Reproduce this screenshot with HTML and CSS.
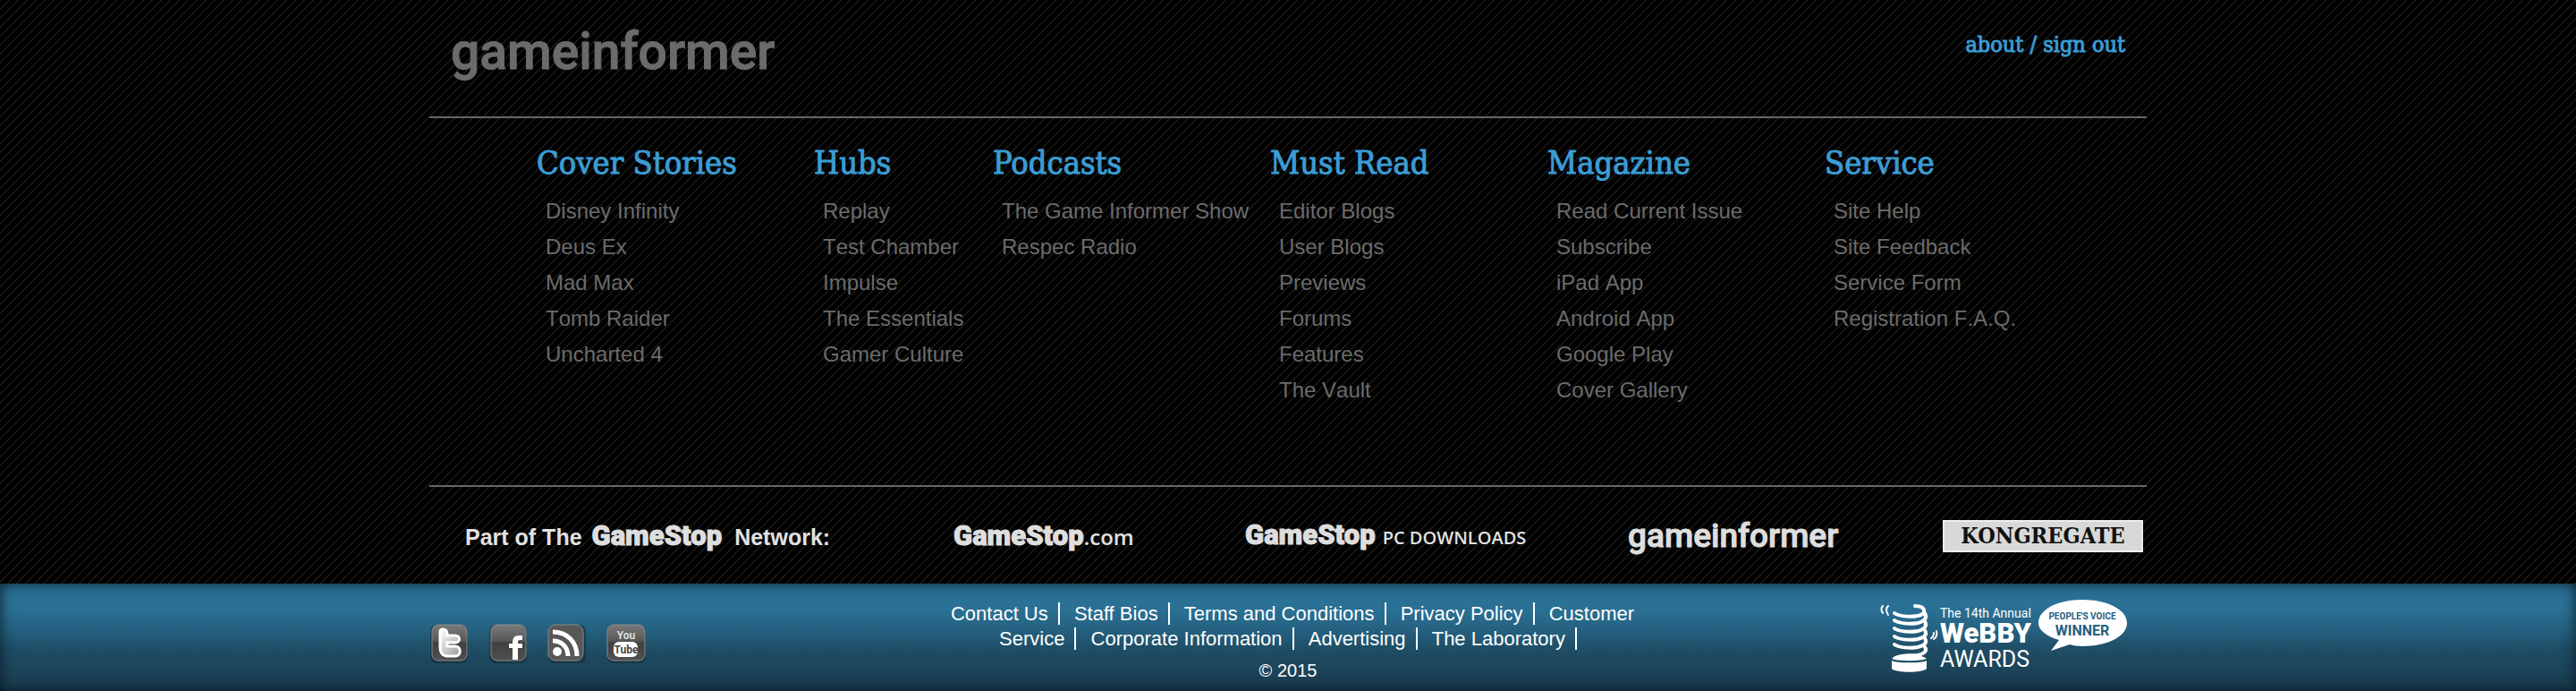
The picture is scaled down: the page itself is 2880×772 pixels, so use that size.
FILE: index.html
```html
<!DOCTYPE html>
<html lang="en">
<head>
<meta charset="utf-8">
<title>Game Informer</title>
<link rel="stylesheet" href="styles.css">
</head>
<body>
<footer class="footer">
  <div class="wrap">
    <div class="top">
      <a class="wordmark" href="#">gameinformer</a>
      <p class="account"><a href="#">about</a> / <a href="#">sign out</a></p>
    </div>
    <nav class="columns" aria-label="Site">
      <section class="column">
        <h2>Cover Stories</h2>
        <ul>
          <li><a href="#">Disney Infinity</a></li>
          <li><a href="#">Deus Ex</a></li>
          <li><a href="#">Mad Max</a></li>
          <li><a href="#">Tomb Raider</a></li>
          <li><a href="#">Uncharted 4</a></li>
        </ul>
      </section>
      <section class="column column-slim">
        <h2>Hubs</h2>
        <ul>
          <li><a href="#">Replay</a></li>
          <li><a href="#">Test Chamber</a></li>
          <li><a href="#">Impulse</a></li>
          <li><a href="#">The Essentials</a></li>
          <li><a href="#">Gamer Culture</a></li>
        </ul>
      </section>
      <section class="column">
        <h2>Podcasts</h2>
        <ul>
          <li><a href="#">The Game Informer Show</a></li>
          <li><a href="#">Respec Radio</a></li>
        </ul>
      </section>
      <section class="column">
        <h2>Must Read</h2>
        <ul>
          <li><a href="#">Editor Blogs</a></li>
          <li><a href="#">User Blogs</a></li>
          <li><a href="#">Previews</a></li>
          <li><a href="#">Forums</a></li>
          <li><a href="#">Features</a></li>
          <li><a href="#">The Vault</a></li>
        </ul>
      </section>
      <section class="column">
        <h2>Magazine</h2>
        <ul>
          <li><a href="#">Read Current Issue</a></li>
          <li><a href="#">Subscribe</a></li>
          <li><a href="#">iPad App</a></li>
          <li><a href="#">Android App</a></li>
          <li><a href="#">Google Play</a></li>
          <li><a href="#">Cover Gallery</a></li>
        </ul>
      </section>
      <section class="column">
        <h2>Service</h2>
        <ul>
          <li><a href="#">Site Help</a></li>
          <li><a href="#">Site Feedback</a></li>
          <li><a href="#">Service Form</a></li>
          <li><a href="#">Registration F.A.Q.</a></li>
        </ul>
      </section>
    </nav>
    <div class="network">
      <p class="network-label">Part of The <span class="gamestop">GameStop</span> Network:</p>
      <a href="#"><span class="gamestop">GameStop</span><span class="dotcom">.com</span></a>
      <a href="#"><span class="gamestop">GameStop</span><span class="pc">PC DOWNLOADS</span></a>
      <a class="wordmark wordmark-small" href="#">gameinformer</a>
      <a class="kongregate" href="#">KONGREGATE</a>
    </div>
  </div>
  <div class="bar">
    <div class="wrap bar-inner">
      <div class="social">
        <a href="#" aria-label="Twitter">
          <svg viewBox="0 0 44 44">
            <defs>
              <linearGradient id="tile" x1="0" y1="0" x2="0" y2="1">
                <stop offset="0" stop-color="#7a7a7a"/><stop offset=".45" stop-color="#585858"/><stop offset=".5" stop-color="#404040"/><stop offset="1" stop-color="#505050"/>
              </linearGradient>
              <linearGradient id="bird" x1="0" y1="0" x2="1" y2="1">
                <stop offset="0" stop-color="#fff"/><stop offset=".6" stop-color="#c4c4c4"/><stop offset="1" stop-color="#999"/>
              </linearGradient>
            </defs>
            <rect class="tile-shadow" x="1" y="1" width="42" height="43" rx="7"/>
            <rect class="tile" x="3" y="1" width="39" height="40" rx="7" fill="url(#tile)"/>
            <path class="halo" fill="url(#bird)" d="M15 6c3 0 5 2 5 5v2h9c6 0 6 8 0 8h-9v4h9c7 0 7 11 0 11H20c-5 0-8-4-8-9V9c0-2 1-3 3-3z"/>
          </svg>
        </a>
        <a href="#" aria-label="Facebook">
          <svg viewBox="0 0 44 44">
            <rect class="tile-shadow" x="1" y="1" width="42" height="43" rx="7"/>
            <rect class="tile" x="3" y="1" width="39" height="40" rx="7" fill="url(#tile)"/>
            <path fill="#fff" d="M38 13v5h-3c-2 0-2 1-2 4h5v5h-5v13h-6V27h-4v-5h4c0-6 2-9 7-9z"/>
          </svg>
        </a>
        <a href="#" aria-label="RSS">
          <svg viewBox="0 0 44 44">
            <rect class="tile-shadow" x="1" y="1" width="42" height="43" rx="7"/>
            <rect class="tile" x="1" y="1" width="39" height="40" rx="8" fill="#585858"/>
            <circle cx="11" cy="31" r="5" fill="#fff"/>
            <path class="wave" d="M6 19c10 0 17 7 17 17M6 9c16 0 27 11 27 27"/>
          </svg>
        </a>
        <a href="#" aria-label="YouTube">
          <svg viewBox="0 0 44 44">
            <rect class="tile-shadow" x="1" y="1" width="43" height="43" rx="7"/>
            <rect class="tile" x="1" y="1" width="42" height="40" rx="7" fill="url(#tile)"/>
            <rect x="8" y="20" width="27" height="17" rx="6" fill="#fff"/>
            <text class="yt" x="22" y="17" fill="#ddd">You</text>
            <text class="yt" x="22" y="33" fill="#444">Tube</text>
          </svg>
        </a>
      </div>
      <div class="legal">
        <p class="legal-links"><a href="#">Contact Us</a> <a href="#">Staff Bios</a> <a href="#">Terms and Conditions</a> <a href="#">Privacy Policy</a> <a href="#">Customer Service</a> <a href="#">Corporate Information</a> <a href="#">Advertising</a> <a href="#">The Laboratory</a></p>
        <p class="copyright">© 2015</p>
      </div>
      <a class="webby" href="#">
        <svg viewBox="0 0 280 84" role="img" aria-label="The 14th Annual Webby Awards, People's Voice Winner">
          <path class="shake" d="M5 7c-2 2-2 5 0 8M11 7c-3 3-2 7 0 10M59 43c2-1 3-3 3-6M62 44c3-2 4-5 3-9"/>
          <path class="coil" d="M41 7c12 0 14 9 3 11-10 2-22 0-26-3M52 15c3 5 0 9-8 11-10 2-22 0-26-3M52 24c3 5 0 9-8 11-10 2-22 0-26-3M52 34c3 5 0 8-8 10-10 2-22 0-26-3M52 43c3 5 0 8-8 10-10 2-22 0-26-3M52 53c3 4 0 7-8 9-14 0-24 1-26 4"/>
          <path fill="#fff" d="M15 66c5-6 33-6 39 0v11c-5 5-34 5-39 0z"/>
          <path class="rim" d="M15 67c6 3 33 3 39 0"/>
          <g class="webby-text">
            <text x="69" y="20" font-size="14">The 14th Annual</text>
            <text class="heavy" x="69" y="48" font-size="31">WeBBY</text>
            <text x="69" y="75" font-size="25">AWARDS</text>
          </g>
          <path fill="#fff" d="M228 0c28 0 50 11 50 26s-22 26-50 26c-5 0-10-1-14-2l-21 7 9-12c-14-4-23-11-23-19 0-15 21-26 49-26z"/>
          <g class="bubble-text">
            <text x="228" y="22" font-size="10">PEOPLE'S VOICE</text>
            <text x="228" y="40" font-size="16">WINNER</text>
          </g>
        </svg>
      </a>
    </div>
  </div>
</footer>
</body>
</html>
```
FILE: styles.css
```css
* { box-sizing: border-box; }

body {
  margin: 0;
  background: #000;
  font-family: "Liberation Sans", Arial, sans-serif;
}

a { color: inherit; text-decoration: none; }
p, h2, ul { margin: 0; padding: 0; }
ul { list-style: none; }

.footer {
  background-image: linear-gradient(135deg, #1a1a1a 10%, transparent 10%, transparent 50%, #1a1a1a 50%, #1a1a1a 60%, transparent 60%);
  background-size: 10px 10px;
}

.wrap { max-width: 1920px; margin: 0 auto; }

.top {
  display: flex;
  justify-content: space-between;
  align-items: flex-start;
  height: 132px;
  padding: 24px 24px 0;
  border-bottom: 2px solid #666;
}

.wordmark {
  font: 500 57px/68px Roboto, sans-serif;
  color: #6b6b6b;
  -webkit-text-stroke: 1px currentColor;
}

.account {
  padding-top: 10px;
  font: 25px/32px "DejaVu Serif Condensed", "DejaVu Serif", serif;
  color: #3b9cd3;
}

.columns {
  display: flex;
  height: 412px;
  padding: 26px 0 0 120px;
  border-bottom: 2px solid #666;
}

.column { flex: 0 1 310px; }
.column-slim { flex-basis: 200px; }

.column h2 {
  font: 36px/48px "DejaVu Serif Condensed", "DejaVu Serif", serif;
  color: #3b9cd3;
  white-space: nowrap;
}

.account, .column h2 { -webkit-text-stroke: 1px #3b9cd3; }

.column ul {
  padding: 10px 0 0 10px;
  font-size: 24px;
  line-height: 40px;
  font-kerning: none;
  color: #6b6b6b;
  white-space: nowrap;
}

.network {
  display: grid;
  grid-template-columns: 546fr 326fr 428fr 352fr 224fr;
  align-items: center;
  height: 108px;
  padding: 2px 4px 0 40px;
  color: #e2e2e2;
  white-space: nowrap;
}

.network-label { font-size: 25px; line-height: 36px; font-weight: bold; }

.gamestop {
  font: 900 31px/36px Roboto, sans-serif;
  color: #dedede;
  -webkit-text-stroke: 1px #dedede;
}

.network-label .gamestop { margin: 0 7px 0 4px; }
.dotcom { font: 600 24px/36px "Open Sans", sans-serif; }
.pc { margin-left: 8px; font: 600 20px/36px "Open Sans", sans-serif; }

.wordmark-small { font-size: 37px; line-height: 36px; color: #dedede; }

.kongregate {
  border: 2px solid #eee;
  background: #d8d8d8;
  color: #111;
  font: bold 25px/32px "DejaVu Serif Condensed", "DejaVu Serif", serif;
  text-align: center;
}

.bar {
  height: 120px;
  border-radius: 0 0 4px 4px;
  background: linear-gradient(#2b7499, #2a7094 25%, #245f7e 45%, #1f4e66 60%, #193a4d);
  box-shadow: inset 0 0 16px #0b1d28;
}

.bar-inner {
  display: grid;
  grid-template-columns: 1fr 800px 1fr;
}

.social { display: flex; gap: 22px; padding-top: 45px; }
.social svg { display: block; width: 44px; height: 44px; }
.tile { stroke: #8a8a8a; stroke-width: 1; }
.tile-shadow { fill: #142a38; opacity: .6; }
.halo { stroke: #fff; stroke-width: 3; }
.wave { fill: none; stroke: #fff; stroke-width: 5; }
.yt { font: bold 12px Roboto, sans-serif; text-anchor: middle; }

.legal { padding-top: 20px; text-align: center; color: #fff; }
.legal-links { font-size: 22px; line-height: 28px; }
.legal-links a { margin-left: 10px; padding-right: 11px; border-right: 2px solid #fff; }
.copyright { padding-top: 7px; font-size: 20px; line-height: 28px; }

.webby { justify-self: end; padding: 18px 20px 0 0; }
.webby svg { display: block; width: 280px; height: 84px; }
.shake, .coil, .rim { fill: none; stroke: #fff; stroke-linecap: round; }
.shake { stroke-width: 2; }
.coil { stroke-width: 4; }
.rim { stroke: #1f4e66; stroke-width: 2; }
.webby-text { fill: #fff; font-family: Roboto, sans-serif; }
.heavy { font-weight: 900; }
.bubble-text { fill: #24607f; font-family: Roboto, sans-serif; font-weight: bold; text-anchor: middle; }
```
